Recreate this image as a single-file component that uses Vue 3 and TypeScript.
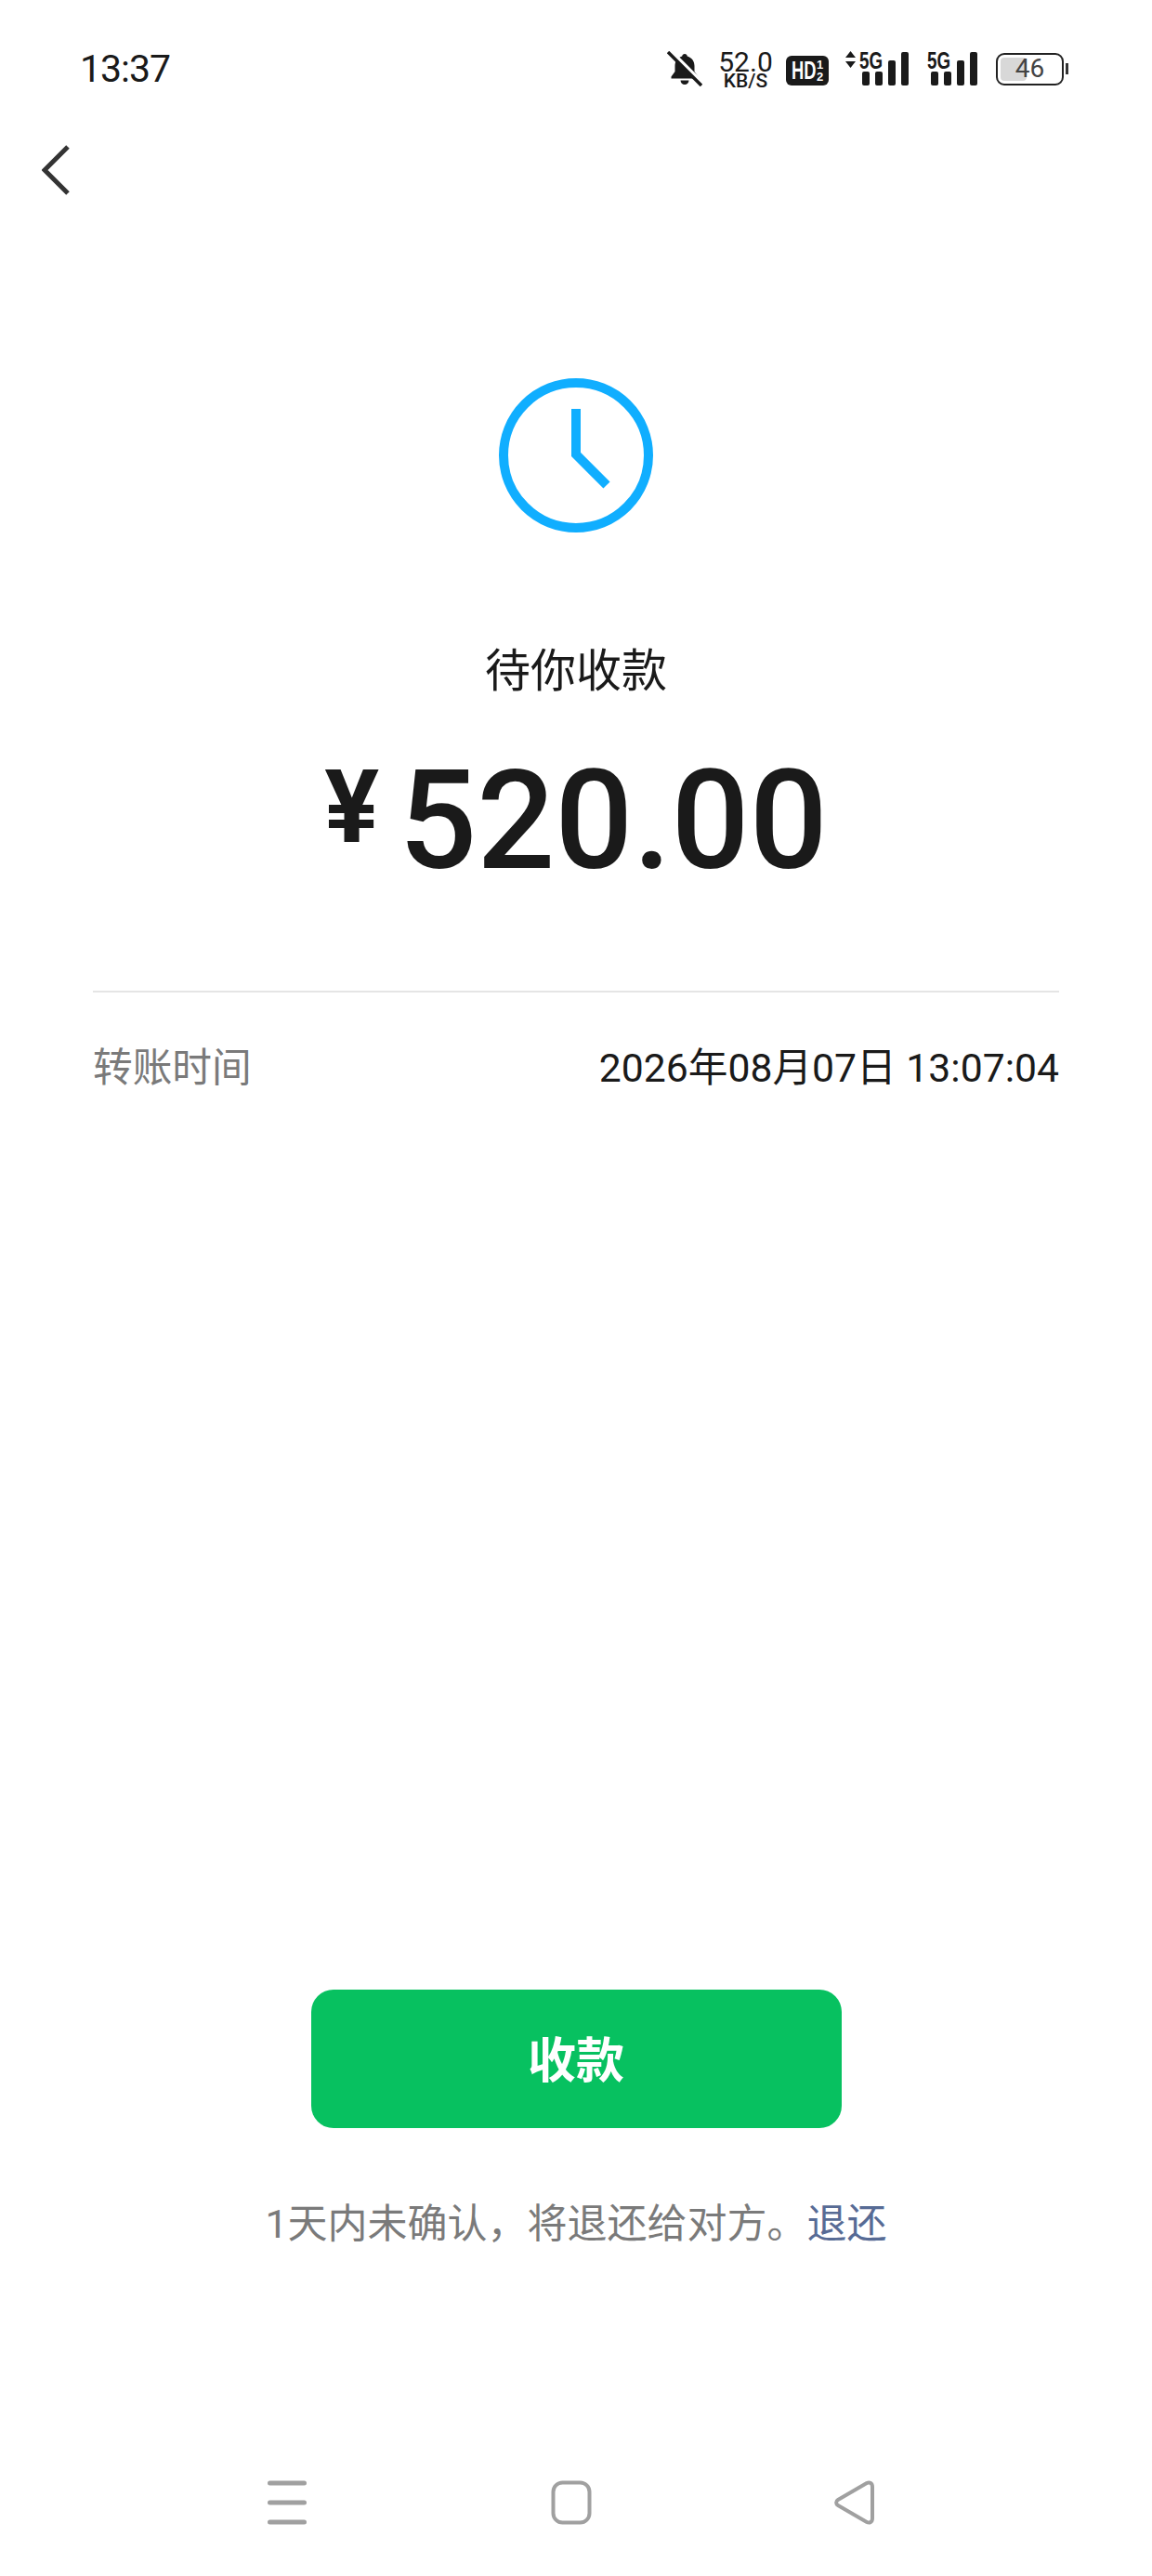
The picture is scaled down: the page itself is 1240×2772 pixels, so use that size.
<template>
  <div class="page">
    <!-- status bar -->
    <div class="status-bar">
      <span class="time">13:37</span>
      <div class="status-icons">
        <svg class="bell" width="38" height="38" viewBox="0 0 38 38">
          <path d="M19 3c1.600 0 2.600 1 2.800 2.400C27 7 29.500 11 29.500 16v6l4 5.500v2H4.500v-2l4-5.500v-6C8.500 11 11 7 16.200 5.400 16.400 4 17.400 3 19 3z" fill="#1a1a1a" />
          <path d="M14.500 31.500h9c0 2.600-2 4.500-4.500 4.500s-4.500-1.900-4.500-4.500z" fill="#1a1a1a" />
          <path d="M3 -1L39 35" stroke="#fff" stroke-width="4" />
          <path d="M1 1L37 37" stroke="#1a1a1a" stroke-width="3.500" />
        </svg>
        <div class="speed">
          <span class="speed-num">52.0</span>
          <span class="speed-unit">KB/S</span>
        </div>
        <div class="hd">
          <span class="hd-text">HD</span>
          <span class="hd-sub"><i>1</i><i>2</i></span>
        </div>
        <div v-for="sim in sims" :key="sim.id" class="sim" :class="{ first: sim.arrows }">
          <svg v-if="sim.arrows" class="arrows" width="11" height="18" viewBox="0 0 11 18">
            <path d="M5.500 0L11 7H0z M5.500 18L0 11h11z" fill="#1a1a1a" />
          </svg>
          <span class="five-g">5G</span>
          <div class="bars">
            <span v-for="(h, i) in barHeights" :key="i" class="bar" :style="{ height: h + 'px' }"></span>
          </div>
        </div>
        <div class="battery">
          <div class="battery-body">
            <div class="battery-fill"></div>
            <span class="battery-num">46</span>
          </div>
          <div class="battery-nub"></div>
        </div>
      </div>
    </div>

    <div class="back">
      <svg width="30" height="56" viewBox="0 0 30 56">
        <path d="M28 2L3 27l25 25" fill="none" stroke="#333" stroke-width="5" />
      </svg>
    </div>

    <main class="content">
      <svg class="clock" width="166" height="166" viewBox="0 0 166 166">
        <circle cx="83" cy="83" r="78" fill="none" stroke="#10aeff" stroke-width="10" />
        <path d="M83 33v49l33 33" fill="none" stroke="#10aeff" stroke-width="10" />
      </svg>
      <div class="title">待你收款</div>
      <div class="amount"><span class="yen">¥</span><span class="value">520.00</span></div>

      <div class="detail">
        <span class="label">转账时间</span>
        <span class="detail-value">2026年08月07日 13:07:04</span>
      </div>
    </main>

    <div class="actions">
      <button class="receive">收款</button>
      <p class="tip">1天内未确认，将退还给对方。<a class="link">退还</a></p>
    </div>

    <!-- system nav -->
    <div class="nav-bar">
      <svg width="46" height="48" viewBox="0 0 46 48">
        <path d="M4.500 3h37M4.500 24h37M4.500 45h37" stroke="#a0a0a0" stroke-width="5" stroke-linecap="round" />
      </svg>
      <svg width="44" height="48" viewBox="0 0 44 48">
        <rect x="2.500" y="2.500" width="39" height="43" rx="10" fill="none" stroke="#a0a0a0" stroke-width="4" />
      </svg>
      <svg width="44" height="48" viewBox="0 0 44 48">
        <path d="M4 21L35 3c3-1.500 6 0 6 4v34c0 4-3 5.500-6 4L4 27c-2.500-1.500-2.500-4.500 0-6z" fill="none" stroke="#a0a0a0" stroke-width="4" stroke-linejoin="round" />
      </svg>
    </div>
  </div>
</template>

<script setup lang="ts">
const sims = [
  { id: 1, arrows: true },
  { id: 2, arrows: false },
];
const barHeights = [15, 15, 27, 36];
</script>

<style>
html,
body {
  margin: 0;
  background: #fff;
}
</style>

<style scoped>
.page {
  width: 1240px;
  height: 2772px;
  box-sizing: border-box;
  display: flex;
  flex-direction: column;
  background: #fff;
  color: #1a1a1a;
  font-family: Roboto, "Noto Sans CJK SC", sans-serif;
  overflow: hidden;
}

.status-bar {
  height: 148px;
  flex: none;
  display: flex;
  align-items: center;
  justify-content: space-between;
  padding: 0 90px 0 86px;
}

.time {
  font-size: 41px;
  line-height: 1;
  letter-spacing: -1px;
}

.status-icons {
  display: flex;
  align-items: center;
}

.bell {
  margin-right: 19px;
}

.speed {
  display: flex;
  flex-direction: column;
  align-items: center;
  width: 55px;
  margin-right: 16px;
  padding-top: 2px;
}

.speed-num {
  font-size: 30px;
  line-height: 24px;
}

.speed-unit {
  font-size: 21px;
  line-height: 17px;
  font-weight: 500;
}

.hd {
  width: 46px;
  height: 32px;
  margin-top: 4px;
  background: #1a1a1a;
  color: #fff;
  border-radius: 6px;
  display: flex;
  align-items: center;
  justify-content: center;
  margin-right: 18px;
  font-family: "Liberation Sans", sans-serif;
  font-weight: 700;
}

.hd-text {
  display: inline-block;
  width: 25px;
  font-size: 27px;
  line-height: 1;
  transform: scaleX(0.68);
  transform-origin: left center;
}

.hd-sub {
  display: flex;
  flex-direction: column;
  font-size: 13px;
  line-height: 13px;
  margin-left: 2px;
}

.hd-sub i {
  font-style: normal;
}

.sim {
  position: relative;
  width: 54px;
  height: 38px;
  margin-right: 20px;
}

.sim.first {
  width: 68px;
}

.arrows {
  position: absolute;
  left: 0;
  top: 0;
}

.five-g {
  position: absolute;
  left: 0;
  top: -2px;
  font-family: "Liberation Sans", sans-serif;
  font-size: 25px;
  font-weight: 700;
  line-height: 24px;
  transform: scaleX(0.75);
  transform-origin: left center;
}

.sim.first .five-g {
  left: 15px;
}

.bars {
  position: absolute;
  right: 0;
  bottom: 1px;
  display: flex;
  align-items: flex-end;
  gap: 6px;
}

.bar {
  width: 8px;
  background: #1a1a1a;
  border-radius: 2px;
}

.battery {
  display: flex;
  align-items: center;
}

.battery-body {
  position: relative;
  width: 73px;
  height: 35px;
  box-sizing: border-box;
  border: 2.500px solid #222;
  border-radius: 9px;
  padding: 3px;
  display: flex;
}

.battery-fill {
  width: 45%;
  background: #d8d8d8;
  border-radius: 4px;
}

.battery-num {
  position: absolute;
  inset: 0;
  text-align: center;
  font-size: 28px;
  line-height: 30px;
  color: #444;
}

.battery-nub {
  width: 3px;
  height: 12px;
  margin-left: 2px;
  background: #333;
}

.back {
  height: 56px;
  padding: 8px 0 0 45px;
  flex: none;
}

.back svg {
  display: block;
}

.content {
  display: flex;
  flex-direction: column;
  align-items: center;
  padding: 0 100px;
  margin-top: 195px;
}

.clock {
  display: block;
}

.title {
  margin-top: 120px;
  font-size: 49px;
  line-height: 60px;
}

.amount {
  display: flex;
  align-items: flex-start;
  margin-top: 53px;
  height: 156px;
  font-weight: 500;
}

.yen {
  font-size: 110px;
  line-height: 126px;
  margin-right: 21px;
  font-weight: 700;
}

.value {
  font-size: 148px;
  line-height: 156px;
}

.detail {
  align-self: stretch;
  margin-top: 104px;
  border-top: 2px solid #e5e5e5;
  padding-top: 51px;
  display: flex;
  justify-content: space-between;
  font-size: 42.700px;
  line-height: 60px;
}

.label {
  color: #7a7a7a;
}

.detail-value {
  color: #1a1a1a;
}

.actions {
  margin-top: auto;
  display: flex;
  flex-direction: column;
  align-items: center;
}

.receive {
  width: 571px;
  height: 149px;
  border: none;
  border-radius: 24px;
  padding: 0 0 4px;
  background: #07c160;
  color: #fff;
  font-family: inherit;
  font-size: 52px;
  font-weight: 700;
}

.tip {
  margin: 73px 0 0;
  font-size: 43px;
  line-height: 60px;
  color: #7a7a7a;
}

.link {
  color: #576b95;
}

.nav-bar {
  margin-top: 246px;
  height: 103px;
  flex: none;
  display: flex;
  justify-content: space-between;
  align-items: flex-start;
  padding: 0 298px 0 286px;
  box-sizing: border-box;
}
</style>
